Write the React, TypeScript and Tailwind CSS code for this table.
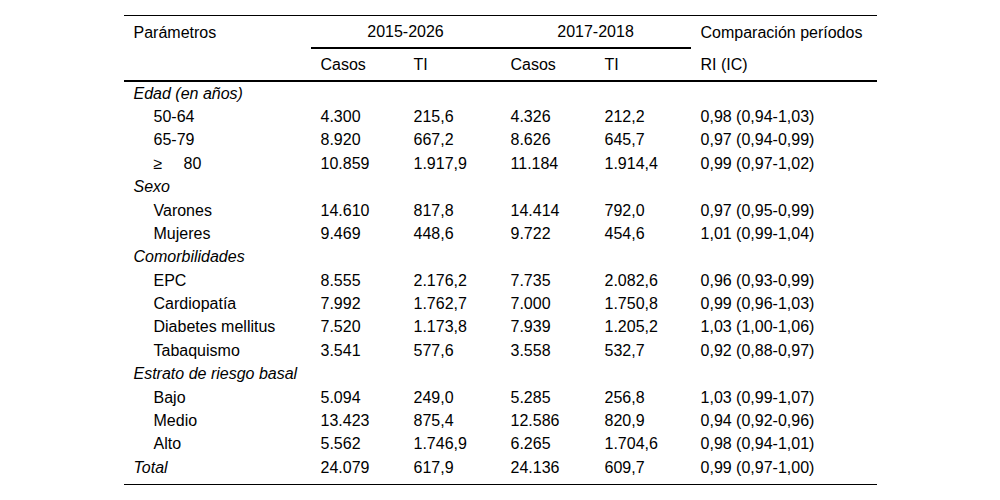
import React from 'react';

type Row = { label: React.ReactNode; values?: string[]; kind: 'group' | 'item' | 'total' };

const rows: Row[] = [
	{ label: 'Edad (en años)', kind: 'group' },
	{ label: '50-64', values: ['4.300', '215,6', '4.326', '212,2', '0,98 (0,94-1,03)'], kind: 'item' },
	{ label: '65-79', values: ['8.920', '667,2', '8.626', '645,7', '0,97 (0,94-0,99)'], kind: 'item' },
	{
		label: (
			<>
				<span className="inline-block w-[30px]">≥</span>80
			</>
		),
		values: ['10.859', '1.917,9', '11.184', '1.914,4', '0,99 (0,97-1,02)'],
		kind: 'item',
	},
	{ label: 'Sexo', kind: 'group' },
	{ label: 'Varones', values: ['14.610', '817,8', '14.414', '792,0', '0,97 (0,95-0,99)'], kind: 'item' },
	{ label: 'Mujeres', values: ['9.469', '448,6', '9.722', '454,6', '1,01 (0,99-1,04)'], kind: 'item' },
	{ label: 'Comorbilidades', kind: 'group' },
	{ label: 'EPC', values: ['8.555', '2.176,2', '7.735', '2.082,6', '0,96 (0,93-0,99)'], kind: 'item' },
	{ label: 'Cardiopatía', values: ['7.992', '1.762,7', '7.000', '1.750,8', '0,99 (0,96-1,03)'], kind: 'item' },
	{ label: 'Diabetes mellitus', values: ['7.520', '1.173,8', '7.939', '1.205,2', '1,03 (1,00-1,06)'], kind: 'item' },
	{ label: 'Tabaquismo', values: ['3.541', '577,6', '3.558', '532,7', '0,92 (0,88-0,97)'], kind: 'item' },
	{ label: 'Estrato de riesgo basal', kind: 'group' },
	{ label: 'Bajo', values: ['5.094', '249,0', '5.285', '256,8', '1,03 (0,99-1,07)'], kind: 'item' },
	{ label: 'Medio', values: ['13.423', '875,4', '12.586', '820,9', '0,94 (0,92-0,96)'], kind: 'item' },
	{ label: 'Alto', values: ['5.562', '1.746,9', '6.265', '1.704,6', '0,98 (0,94-1,01)'], kind: 'item' },
	{ label: 'Total', values: ['24.079', '617,9', '24.136', '609,7', '0,99 (0,97-1,00)'], kind: 'total' },
];

function App() {
	return (
		<div className="min-h-[500px] bg-white pt-[15px] font-['Liberation_Sans',Arial,sans-serif] text-[16px] leading-[18px] text-black">
			<div className="mx-auto w-[753px] border-y border-black">
				<table className="w-full table-fixed border-separate border-spacing-0 text-left">
					<colgroup>
						<col className="w-[187px]" />
						<col className="w-[93px]" />
						<col className="w-[97px]" />
						<col className="w-[94px]" />
						<col className="w-[96px]" />
						<col className="w-[186px]" />
					</colgroup>
					<thead>
						<tr className="h-[33px]">
							<th className="pl-[10px] align-middle font-normal">Parámetros</th>
							<th colSpan={2} className="border-b-2 border-black text-center align-middle font-normal">
								2015-2026
							</th>
							<th colSpan={2} className="border-b-2 border-black text-center align-middle font-normal">
								2017-2018
							</th>
							<th className="pl-[10px] align-middle font-normal">Comparación períodos</th>
						</tr>
						<tr className="h-[33px]">
							<th className="border-b-2 border-black font-normal" />
							<th className="border-b-2 border-black pl-[10px] font-normal">Casos</th>
							<th className="border-b-2 border-black pl-[10px] font-normal">TI</th>
							<th className="border-b-2 border-black pl-[10px] font-normal">Casos</th>
							<th className="border-b-2 border-black pl-[10px] font-normal">TI</th>
							<th className="border-b-2 border-black pl-[10px] font-normal">RI (IC)</th>
						</tr>
					</thead>
					<tbody>
						{rows.map((row, i) => (
							<tr key={i} className="h-[23.375px]">
								<td
									colSpan={row.kind === 'group' ? 6 : 1}
									className={
										row.kind === 'item'
											? 'whitespace-nowrap pl-[30px]'
											: 'whitespace-nowrap pl-[10px] italic'
									}
								>
									{row.label}
								</td>
								{row.values?.map((v, j) => (
									<td key={j} className="whitespace-nowrap pl-[10px]">
										{v}
									</td>
								))}
							</tr>
						))}
						<tr className="h-[5px]">
							<td colSpan={6} />
						</tr>
					</tbody>
				</table>
			</div>
		</div>
	);
}

export default App;
